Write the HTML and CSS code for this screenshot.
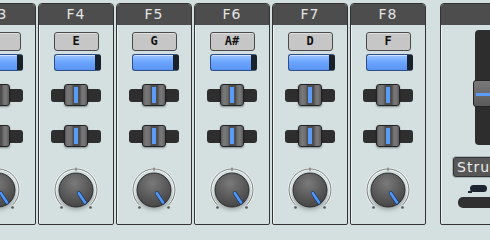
FILE: index.html
```html
<!DOCTYPE html>
<html lang="en">
<head>
    <meta charset="UTF-8">
    <title>Pad Strips</title>
    <link rel="stylesheet" href="styles.css">
</head>
<body>
    <div class="rack">
        <div class="strip">
            <div class="strip-head">F3</div>
            <div class="note"></div>
            <div class="level"></div>
            <div class="fader"><div class="track"></div><div class="cap"></div></div>
            <div class="fader second"><div class="track"></div><div class="cap"></div></div>
            <svg class="knob" viewBox="0 0 46 48"><use href="#knob"/></svg>
        </div>
        <div class="strip">
            <div class="strip-head">F4</div>
            <div class="note">E</div>
            <div class="level"></div>
            <div class="fader"><div class="track"></div><div class="cap"></div></div>
            <div class="fader second"><div class="track"></div><div class="cap"></div></div>
            <svg class="knob" viewBox="0 0 46 48"><use href="#knob"/></svg>
        </div>
        <div class="strip">
            <div class="strip-head">F5</div>
            <div class="note">G</div>
            <div class="level"></div>
            <div class="fader"><div class="track"></div><div class="cap"></div></div>
            <div class="fader second"><div class="track"></div><div class="cap"></div></div>
            <svg class="knob" viewBox="0 0 46 48"><use href="#knob"/></svg>
        </div>
        <div class="strip">
            <div class="strip-head">F6</div>
            <div class="note">A#</div>
            <div class="level"></div>
            <div class="fader"><div class="track"></div><div class="cap"></div></div>
            <div class="fader second"><div class="track"></div><div class="cap"></div></div>
            <svg class="knob" viewBox="0 0 46 48"><use href="#knob"/></svg>
        </div>
        <div class="strip">
            <div class="strip-head">F7</div>
            <div class="note">D</div>
            <div class="level"></div>
            <div class="fader"><div class="track"></div><div class="cap"></div></div>
            <div class="fader second"><div class="track"></div><div class="cap"></div></div>
            <svg class="knob" viewBox="0 0 46 48"><use href="#knob"/></svg>
        </div>
        <div class="strip">
            <div class="strip-head">F8</div>
            <div class="note">F</div>
            <div class="level"></div>
            <div class="fader"><div class="track"></div><div class="cap"></div></div>
            <div class="fader second"><div class="track"></div><div class="cap"></div></div>
            <svg class="knob" viewBox="0 0 46 48"><use href="#knob"/></svg>
        </div>

        <div class="master">
            <div class="strip-head"></div>
            <div class="vtrack"><div class="vcap"></div></div>
            <div class="mode">Strum</div>
            <div class="pill"></div>
            <div class="bar"></div>
        </div>
    </div>

    <svg class="defs" width="0" height="0">
        <defs>
            <radialGradient id="knobFill" cx="45%" cy="30%" r="75%">
                <stop offset="0" stop-color="#7a7a7a"/>
                <stop offset="0.6" stop-color="#585858"/>
                <stop offset="1" stop-color="#434343"/>
            </radialGradient>
            <filter id="soft" x="-50%" y="-50%" width="200%" height="200%">
                <feGaussianBlur stdDeviation="2.5"/>
            </filter>
            <symbol id="knob" viewBox="0 0 46 48">
                <path d="M8.2 38.8 A21 21 0 1 1 37.8 38.8" fill="none" stroke="#f2f6f6" stroke-width="2.5"/>
                <path d="M8.2 38.8 A21 21 0 1 1 37.8 38.8" fill="none" stroke="#7d7d7d" stroke-width="1"/>
                <line x1="23" y1="1.5" x2="23" y2="5" stroke="#6a6a6a" stroke-width="1"/>
                <circle cx="8.5" cy="41.5" r="1.3" fill="#555"/>
                <circle cx="37.5" cy="41.5" r="1.3" fill="#555"/>
                <ellipse cx="23" cy="30" rx="16" ry="13" fill="rgba(0,0,0,0.35)" filter="url(#soft)"/>
                <circle cx="23" cy="24" r="17" fill="url(#knobFill)" stroke="#2c2c2c" stroke-width="1"/>
                <line x1="25.8" y1="27.2" x2="32" y2="36.5" stroke="#1d3a66" stroke-width="4" stroke-linecap="round"/>
                <line x1="25.8" y1="27.2" x2="32" y2="36.5" stroke="#5297f5" stroke-width="2.6" stroke-linecap="round"/>
            </symbol>
        </defs>
    </svg>
</body>
</html>
```

FILE: styles.css
```css
body {
    margin: 0;
    height: 240px;
    overflow: hidden;
    background: #d4e0e0;
    font-family: "DejaVu Sans", sans-serif;
}
.rack {
    display: flex;
    gap: 2px;
    margin-left: -40px;
    padding-top: 3px;
}
.strip {
    flex: none;
    width: 76px;
    height: 222px;
    box-sizing: border-box;
    border: 1px solid #333;
    border-radius: 4px 4px 2px 2px;
    background: #d4e0e0;
    box-shadow: inset 1px 0 #eef4f4;
    display: flex;
    flex-direction: column;
    align-items: center;
}
.strip-head {
    align-self: stretch;
    height: 21px;
    background: #4d4d4d;
    border-radius: 3px 3px 0 0;
    color: #e4e4e4;
    font-size: 14px;
    line-height: 21px;
    text-align: center;
    letter-spacing: 1px;
}
.note {
    margin-top: 7px;
    width: 45px;
    height: 19px;
    box-sizing: border-box;
    border: 1px solid #4a4a4a;
    border-radius: 3px;
    background: #c6c6c6;
    box-shadow: inset 0 1px #e2e2e2;
    font-family: "DejaVu Sans Mono", monospace;
    font-weight: bold;
    font-size: 12px;
    line-height: 17px;
    text-align: center;
    color: #111;
}
.level {
    margin-top: 3px;
    margin-left: 2px;
    width: 47px;
    height: 17px;
    box-sizing: border-box;
    border: 1px solid #2b4f86;
    border-right: 6px solid #18212c;
    border-radius: 3px;
    background: linear-gradient(#9cc4ff, #6da6ff 45%, #5a93f2);
    box-shadow: inset 0 1px rgba(255,255,255,0.5);
}
.fader {
    position: relative;
    margin-top: 13px;
    width: 50px;
    height: 22px;
    display: flex;
    align-items: center;
    justify-content: center;
}
.fader.second {
    margin-top: 19px;
}
.track {
    width: 50px;
    height: 13px;
    background: #2e2e2e;
    border-radius: 3px;
}
.cap {
    position: absolute;
    left: 13px;
    top: 0;
    width: 24px;
    height: 22px;
    box-sizing: border-box;
    border: 1px solid #222;
    border-radius: 3px;
    background: linear-gradient(90deg, #5a5a5a 0, #7a7a7a 3px, #6c6c6c 7px, #4d4d4d 8px, #4d4d4d 15px, #6c6c6c 16px, #7a7a7a 19px, #5a5a5a 100%);
    box-shadow: 0 1px 2px rgba(0,0,0,0.4);
}
.cap::after {
    content: "";
    position: absolute;
    left: 9px;
    top: 2px;
    width: 4px;
    height: 16px;
    background: #5a9cf8;
}
.knob {
    margin-top: 19px;
    width: 46px;
    height: 48px;
}
.master {
    flex: none;
    width: 80px;
    height: 222px;
    margin-left: 12px;
    box-sizing: border-box;
    border: 1px solid #333;
    border-radius: 4px 4px 2px 2px;
    box-shadow: inset 1px 0 #eef4f4;
    display: flex;
    flex-direction: column;
    align-items: flex-start;
}
.vtrack {
    position: relative;
    margin-top: 5px;
    margin-left: 34px;
    width: 40px;
    height: 115px;
    background: #2d2d2d;
    border-radius: 4px 0 0 4px;
}
.vcap {
    position: absolute;
    left: -2px;
    top: 50px;
    width: 44px;
    height: 27px;
    box-sizing: border-box;
    border: 1px solid #222;
    border-radius: 3px;
    background: linear-gradient(#7a7a7a, #5a5a5a);
}
.vcap::after {
    content: "";
    position: absolute;
    left: 2px;
    right: 0;
    top: 12px;
    height: 3px;
    background: #5a9cf8;
}
.mode {
    margin-top: 12px;
    margin-left: 12px;
    width: 60px;
    height: 20px;
    box-sizing: border-box;
    border: 1px solid #333;
    border-radius: 3px;
    background: #575757;
    box-shadow: 0 0 0 1px #aab4b4;
    color: #ececec;
    font-size: 14px;
    line-height: 18px;
    padding-left: 3px;
    letter-spacing: 1px;
}
.pill {
    position: relative;
    margin-top: 8px;
    margin-left: 29px;
    width: 17px;
    height: 7px;
    border-radius: 4px;
    background: #1b2430;
}
.pill::before {
    content: "";
    position: absolute;
    left: -2px;
    bottom: -1px;
    width: 4px;
    height: 2px;
    background: #1b2430;
}
.bar {
    margin-top: 5px;
    margin-left: 17px;
    width: 70px;
    height: 11px;
    border-radius: 5px;
    background: #303030;
}
.defs {
    display: block;
}
```
